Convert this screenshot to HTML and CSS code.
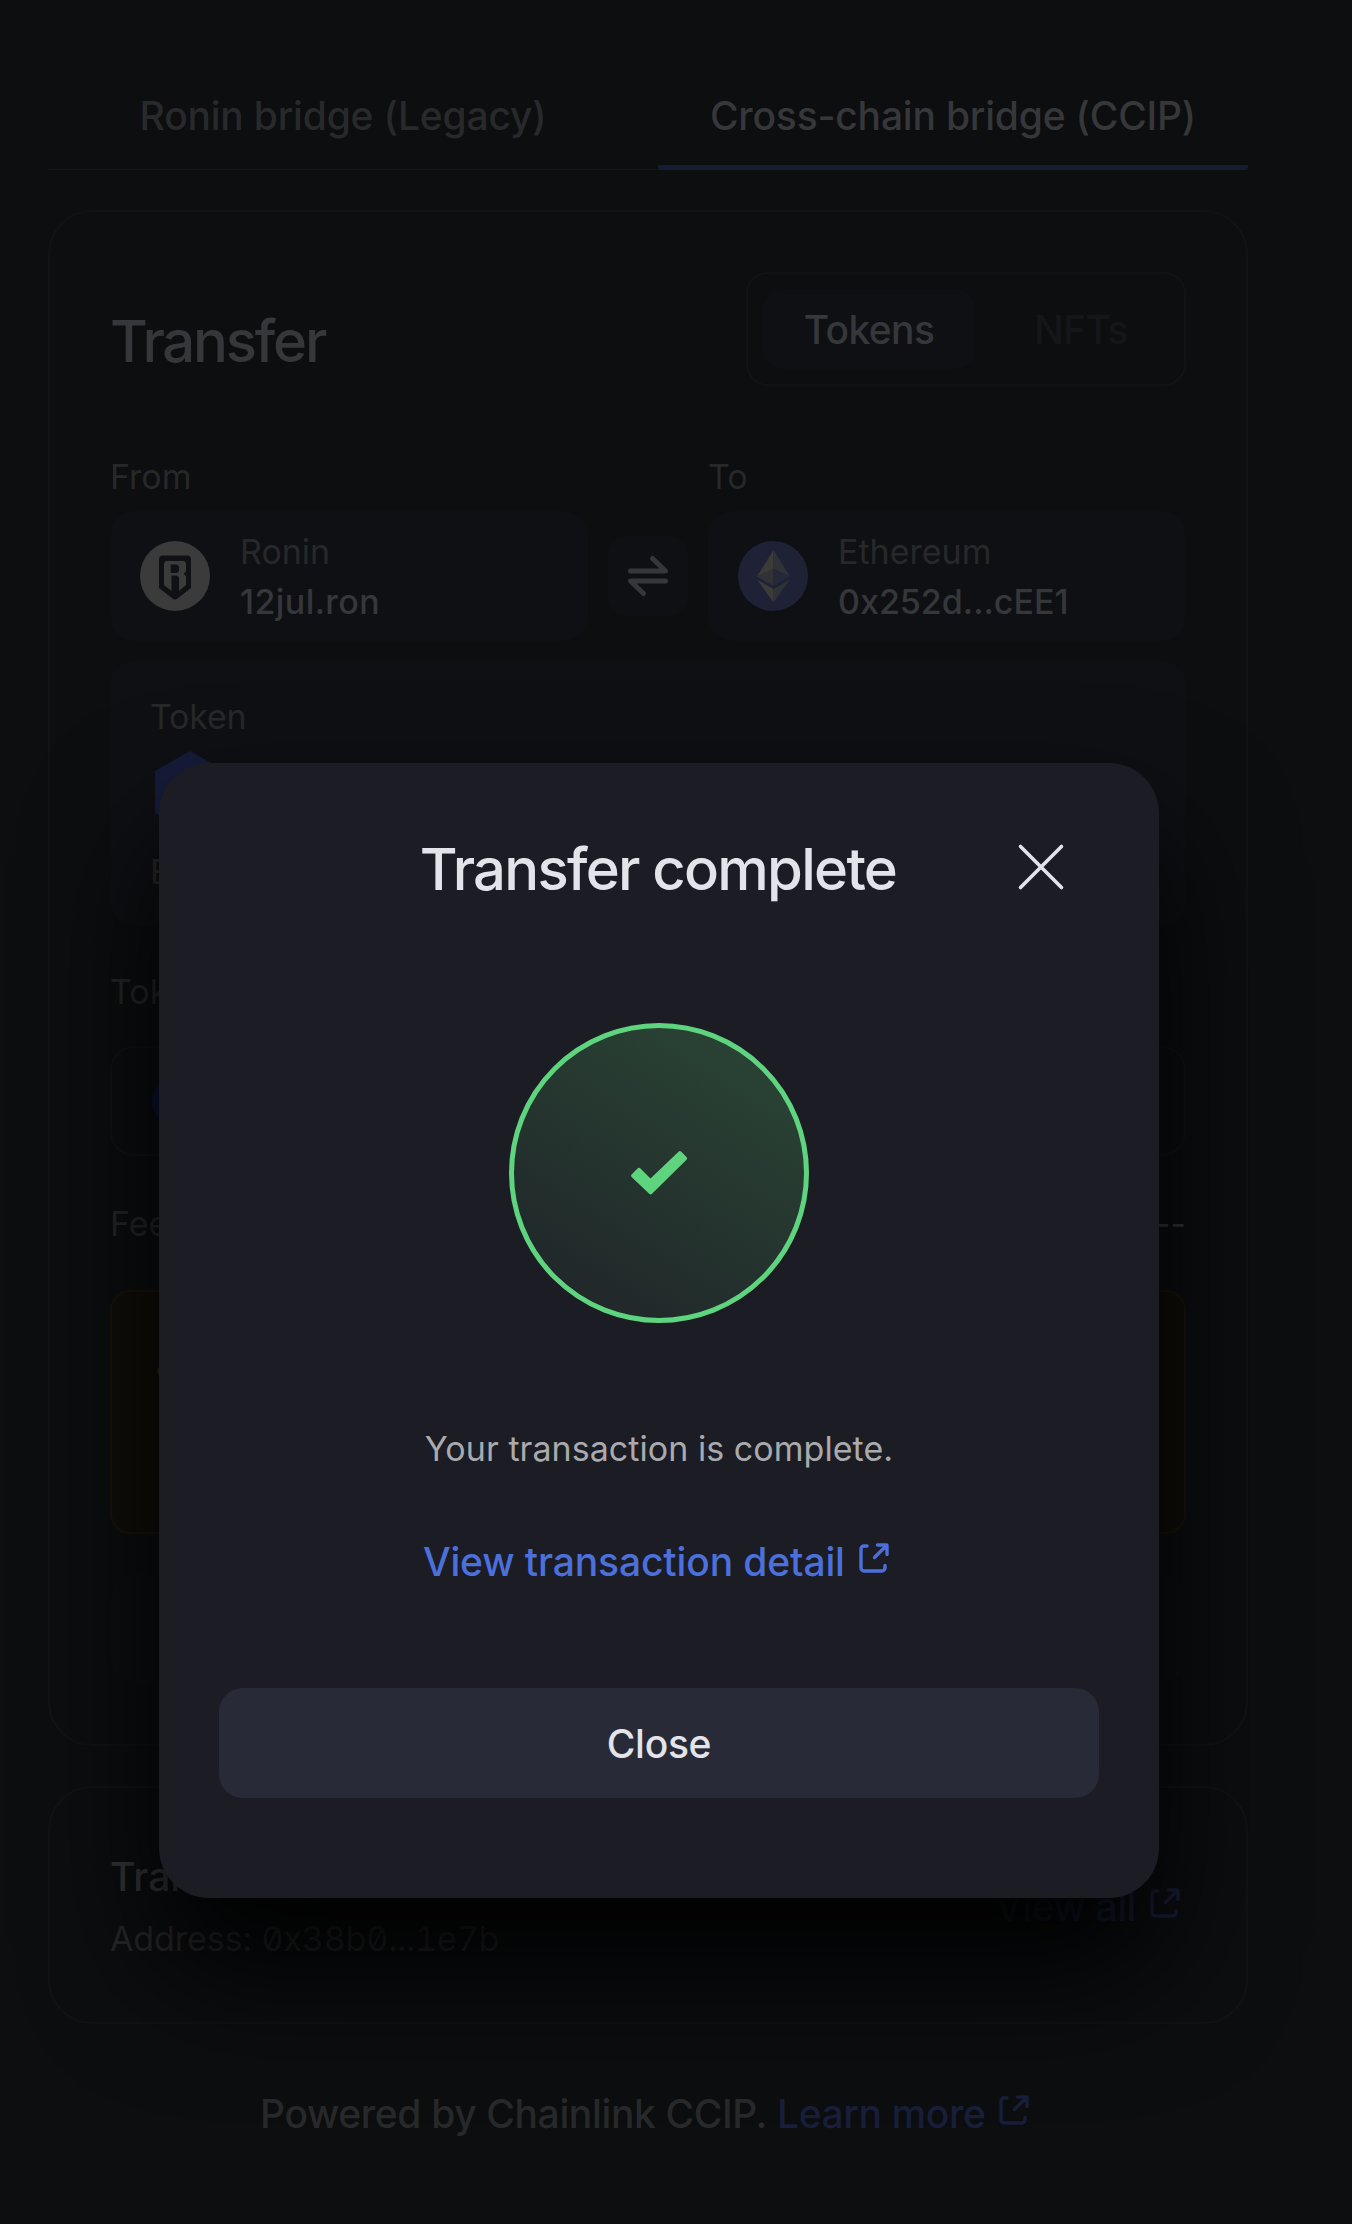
FILE: index.html
```html
<!DOCTYPE html>
<html lang="en">
<head>
<meta charset="utf-8">
<title>Cross-chain bridge</title>
<link rel="stylesheet" href="styles.css">
</head>
<body>
<svg class="defs" width="0" height="0" aria-hidden="true">
  <symbol id="external" viewBox="0 0 30 30">
    <path d="M8 3H5a3 3 0 0 0-3 3v19a3 3 0 0 0 3 3h18a3 3 0 0 0 3-3v-2.500M18.500 2H28V11.500M27.500 2.500 15.500 14.500" fill="none" stroke="currentColor" stroke-width="3.400" stroke-linecap="round" stroke-linejoin="round"/>
  </symbol>
</svg>
<div class="page">
  <nav class="tabs">
    <a class="tab">Ronin bridge (Legacy)</a>
    <a class="tab tab-active">Cross-chain bridge (CCIP)</a>
  </nav>

  <main class="card transfer">
    <header class="transfer-head">
      <h1>Transfer</h1>
      <div class="segment"><span class="seg seg-active">Tokens</span><span class="seg">NFTs</span></div>
    </header>
    <div class="route">
      <section class="side">
        <div class="label">From</div>
        <div class="account">
          <svg width="70" height="70" viewBox="0 0 70 70"><circle cx="35" cy="35" r="35" fill="#3b3b3b"/><path d="M23 14.500h24a4 4 0 0 1 4 4V47L37.500 57.500q-2.500 2-5 0L19 47V18.500a4 4 0 0 1 4-4z" fill="#101114"/><path fill="#3b3b3b" fill-rule="evenodd" d="M27 20h16q3 0 3 3v7.500L43.500 33l2.500 2v9l-7 6V36.500l-2-2h-5.500V50L24 44V23q0-3 3-3zM30.700 23.500V32H37l2-2v-4.500l-2-2z"/></svg>
          <div class="account-text"><div class="chain">Ronin</div><div class="name name-ron">12jul.ron</div></div>
        </div>
      </section>
      <button class="swap"><svg width="44" height="44" viewBox="0 0 44 44"><path d="M4.500 17H39.500L26.500 4.500M39.500 27H4.500L17.500 39.500" fill="none" stroke="#36373a" stroke-width="5" stroke-linecap="round" stroke-linejoin="round"/></svg></button>
      <section class="side">
        <div class="label">To</div>
        <div class="account">
          <svg width="70" height="70" viewBox="0 0 70 70"><circle cx="35" cy="35" r="35" fill="#1f2136"/><path d="M35.500 9 19 35.500l16.500-7.500z" fill="#3b3b38"/><path d="M35.500 9 52 35.500 35.500 28z" fill="#303238"/><path d="m19 35.500 16.500-7.500v17z" fill="#303238"/><path d="M52 35.500 35.500 28v17z" fill="#26283a"/><path d="M19 38.500 35.500 48v13.500z" fill="#3b3b38"/><path d="M52 38.500 35.500 48v13.500z" fill="#303238"/></svg>
          <div class="account-text"><div class="chain">Ethereum</div><div class="name">0x252d...cEE1</div></div>
        </div>
      </section>
    </div>
    <section class="token">
      <div class="label">Token</div>
      <svg class="hex" width="70" height="82" viewBox="0 0 70 82"><path d="M35 0 70 20v42L35 82 0 62V20z" fill="#161c3a"/><path d="M35 20 53 30v22L35 62 17 52V30z" fill="#0b0d12"/></svg>
      <div class="label balance">Balance</div>
    </section>
    <div class="label address-label">Token address</div>
    <div class="token-address"><i class="coin"></i></div>
    <div class="fee label"><span>Fee</span><span class="fee-value">--</span></div>
    <div class="warning"><i class="warning-dot"></i></div>
    <div class="submit"></div>
  </main>

  <section class="card history">
    <div>
      <h2>Transactions</h2>
      <div class="label history-address">Address: <span>0x38b0...1e7b</span></div>
    </div>
    <a class="link view-all">View all <svg width="30" height="30"><use href="#external"/></svg></a>
  </section>

  <footer class="footer"><span class="powered">Powered by Chainlink CCIP.</span><a class="link learn">Learn more <svg width="30" height="30"><use href="#external"/></svg></a></footer>
</div>

<div class="modal" role="dialog">
  <header class="modal-head">
    <h2 class="modal-title">Transfer complete</h2>
    <svg class="dismiss" width="48" height="48" viewBox="0 0 48 48"><path d="M3.500 3.500l41 41M44.500 3.500l-41 41" stroke="#e3e4e9" stroke-width="3.600" stroke-linecap="round"/></svg>
  </header>
  <div class="success"><svg width="58" height="46" viewBox="0 0 58 46"><path d="M1.600 24.500 7.500 18.500a2 2 0 0 1 3 0L20.500 28.500 48.500 1.700a2 2 0 0 1 2.800 0L56.500 7a2 2 0 0 1 0 2.800L22 43.800a2 2 0 0 1-2.800 0L1.600 27a1.800 1.800 0 0 1 0-2.500z" fill="#5fd47f"/></svg></div>
  <p class="message">Your transaction is complete.</p>
  <a class="detail">View transaction detail <svg width="30" height="30"><use href="#external"/></svg></a>
  <button class="close">Close</button>
</div>
</body>
</html>
```
FILE: styles.css
```css
* { box-sizing: border-box; }
body {
  margin: 0;
  min-height: 2224px;
  background: #0c0e10;
  color: #36373a;
  font-family: Inter, "Liberation Sans", sans-serif;
  position: relative;
  overflow: hidden;
}
h1, h2, p { margin: 0; font-weight: 500; }
button { border: 0; padding: 0; font: inherit; }
.defs { display: block; height: 0; }
.page { width: 1200px; margin-left: 48px; }

.tabs {
  display: flex;
  gap: 20px;
  height: 170px;
  border-bottom: 1px solid #131417;
}
.tab {
  flex: 1;
  height: 170px;
  padding-top: 92px;
  line-height: 48px;
  font-size: 39px;
  font-weight: 500;
  letter-spacing: -0.2px;
  text-align: center;
  color: #28292b;
  white-space: nowrap;
}
.tab-active {
  color: #36373a;
  background: linear-gradient(#171b33, #171b33) bottom / 100% 5px no-repeat;
  border-radius: 4px;
}

.card { border: 2px solid #121316; border-radius: 44px; }
.transfer { height: 1536px; margin-top: 40px; padding: 60px 60px 0; }
.transfer-head { display: flex; justify-content: space-between; height: 114px; }
h1 { font-size: 58px; line-height: 138px; letter-spacing: -2.2px; }
.segment {
  display: flex;
  width: 440px;
  height: 114px;
  padding: 15px 0 15px 15px;
  border: 2px solid #121316;
  border-radius: 22px;
}
.seg {
  flex: none;
  width: 212px;
  height: 80px;
  line-height: 82px;
  font-size: 39px;
  font-weight: 500;
  letter-spacing: -0.6px;
  text-align: center;
  color: #15161a;
}
.seg-active { background: #0f1014; color: #36373a; border-radius: 20px; }

.label { font-size: 34px; line-height: 44px; color: #27282a; }
.route { display: flex; gap: 20px; align-items: flex-end; margin-top: 69px; }
.side { width: 478px; }
.side > .label { margin-bottom: 12px; }
.account {
  display: flex;
  align-items: center;
  gap: 30px;
  height: 130px;
  padding-left: 30px;
  border-radius: 24px;
  background: #0f1014;
}
.account-text { padding-top: 2px; }
.chain { font-size: 34px; line-height: 50px; color: #27282a; }
.name { font-size: 34px; line-height: 50px; font-weight: 500; }
.name-ron { letter-spacing: 0.4px; }
.swap {
  display: flex;
  align-items: center;
  justify-content: center;
  width: 80px;
  height: 80px;
  margin-bottom: 25px;
  border-radius: 20px;
  background: #0f1014;
}
.token {
  height: 265px;
  margin-top: 20px;
  padding: 34px 40px 0;
  border-radius: 24px;
  background: #0f1014;
}
.token .label { letter-spacing: -0.2px; }
.hex { display: block; margin: 12px 0 17px 5px; }
.address-label { margin-top: 44px; }
.token-address {
  display: flex;
  align-items: center;
  height: 110px;
  margin-top: 32px;
  padding-left: 40px;
  border: 2px solid #121316;
  border-radius: 24px;
}
.coin { width: 50px; height: 50px; border-radius: 50%; background: #0f1433; }
.fee { display: flex; justify-content: space-between; margin-top: 46px; }
.fee-value { color: #36373a; }
.warning {
  height: 244px;
  margin-top: 44px;
  padding: 74px 45px;
  border: 2px solid #1b150b;
  border-radius: 20px;
  background: #110f0a;
}
.warning-dot { display: block; width: 10px; height: 10px; border-radius: 50%; background: #33270b; }
.submit { height: 110px; margin-top: 40px; border-radius: 24px; background: #0e0f12; }

.history {
  display: flex;
  justify-content: space-between;
  height: 238px;
  margin-top: 40px;
  padding: 64px 66px 0 60px;
}
.history h2 { font-size: 39px; line-height: 50px; }
.history-address { margin-top: 15px; white-space: nowrap; letter-spacing: -0.1px; }
.history-address span { font-feature-settings: "zero", "tnum"; letter-spacing: -0.15px; }
.link { color: #191f3b; font-size: 39px; line-height: 50px; font-weight: 500; letter-spacing: -0.4px; white-space: nowrap; }
.link svg, .detail svg { margin-left: 4px; vertical-align: 3px; }
.view-all { margin-top: 30px; }
.footer { display: flex; gap: 10px; margin: 65px 0 0 212px; font-size: 39px; line-height: 50px; font-weight: 500; color: #28292b; white-space: nowrap; }
.powered { letter-spacing: -0.36px; }

.modal {
  position: absolute;
  left: 159px;
  top: 763px;
  width: 1000px;
  height: 1135px;
  padding: 0 60px;
  border-radius: 50px;
  background: #1c1c24;
  box-shadow: 0 72px 130px 0 #000;
  text-align: center;
}
.modal-head { display: flex; align-items: center; justify-content: flex-end; margin-top: 76px; height: 60px; }
.modal-title { width: 480px; margin-right: 119px; font-size: 58px; line-height: 60px; letter-spacing: -1.75px; color: #e3e4e9; white-space: nowrap; }
.dismiss { margin: 0 34px 4px 0; }
.success {
  display: flex;
  align-items: center;
  justify-content: center;
  width: 300px;
  height: 300px;
  margin: 124px auto 0;
  border: 5px solid #5fd47f;
  border-radius: 50%;
  background: linear-gradient(212deg, #2b4736 0%, #1f2328 100%);
}
.message { margin-top: 101px; font-size: 34px; line-height: 50px; letter-spacing: 0.05px; font-weight: 400; color: #a9aaad; }
.detail { display: block; margin: 63px 6px 0 0; font-size: 39px; line-height: 50px; letter-spacing: -0.12px; font-weight: 500; color: #4c70db; white-space: nowrap; }
.close {
  display: block;
  width: 880px;
  height: 110px;
  margin-top: 101px;
  border-radius: 24px;
  background: #292a37;
  color: #e3e4e9;
  font-size: 39px;
  font-weight: 500;
  letter-spacing: -0.3px;
}
```
